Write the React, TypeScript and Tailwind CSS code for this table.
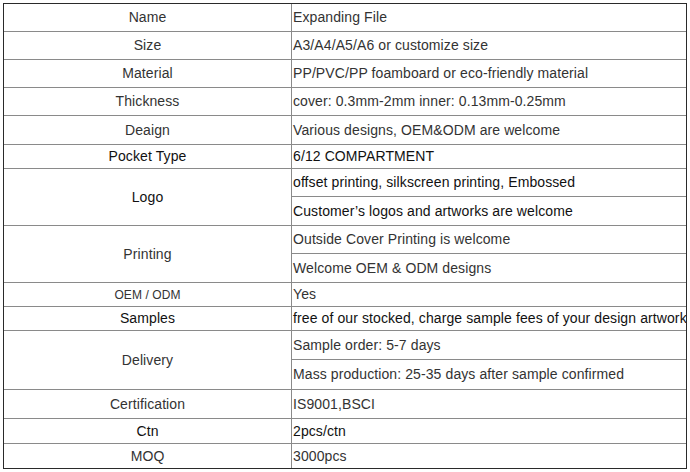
const rows: { label: string; values: string[]; small?: boolean; dark?: boolean }[] = [
  { label: "Name", values: ["Expanding File"] },
  { label: "Size", values: ["A3/A4/A5/A6 or customize size"] },
  { label: "Material", values: ["PP/PVC/PP foamboard or eco-friendly material"] },
  { label: "Thickness", values: ["cover: 0.3mm-2mm inner: 0.13mm-0.25mm"] },
  { label: "Deaign", values: ["Various designs, OEM&ODM are welcome"] },
  { label: "Pocket Type", values: ["6/12 COMPARTMENT"], dark: true },
  {
    label: "Logo",
    values: ["offset printing, silkscreen printing, Embossed", "Customer’s logos and artworks are welcome"],
    dark: true,
  },
  { label: "Printing", values: ["Outside Cover Printing is welcome", "Welcome OEM & ODM designs"] },
  { label: "OEM / ODM", values: ["Yes"], small: true },
  { label: "Samples", values: ["free of our stocked, charge sample fees of your design artwork"], dark: true },
  { label: "Delivery", values: ["Sample order: 5-7 days", "Mass production: 25-35 days after sample confirmed"] },
  { label: "Certification", values: ["IS9001,BSCI"] },
  { label: "Ctn", values: ["2pcs/ctn"], dark: true },
  { label: "MOQ", values: ["3000pcs"] },
];

export default function App() {
  return (
    <div className="w-[690px] h-[472px] bg-white pt-[3px] pl-[3px]" style={{ fontFamily: '"Liberation Sans", Arial, sans-serif' }}>
      <div className="w-[684px] border border-[#2a2a2a] bg-[#8a8a8a]">
        <div className="grid grid-cols-[287px_394px] grid-rows-[27px_27px_27px_27px_28px_23px_27px_28px_27px_28px_23px_23px_28px_29px_28px_24px_24px] gap-px">
          {rows.map((r, i) => (
            <Row key={i} {...r} />
          ))}
        </div>
      </div>
    </div>
  );
}

function Row({ label, values, small, dark }: { label: string; values: string[]; small?: boolean; dark?: boolean }) {
  const color = dark ? "text-[#111]" : "text-[#333]";
  return (
    <>
      <div
        className={`bg-white flex items-center justify-center tracking-[0.1px] ${color} ${small ? "text-[12px]" : "text-[14px]"} ${
          values.length > 1 ? "row-span-2" : ""
        }`}
      >
        {label}
      </div>
      {values.length > 1 ? (
        <div className="row-span-2 grid grid-rows-subgrid gap-px">
          {values.map((v, j) => (
            <div key={j} className={`bg-white flex items-center pl-px text-[14px] tracking-[0.1px] whitespace-nowrap overflow-hidden ${color}`}>
              {v}
            </div>
          ))}
        </div>
      ) : (
        <div className={`bg-white flex items-center pl-px text-[14px] tracking-[0.1px] whitespace-nowrap overflow-hidden ${color}`}>
          {values[0]}
        </div>
      )}
    </>
  );
}
